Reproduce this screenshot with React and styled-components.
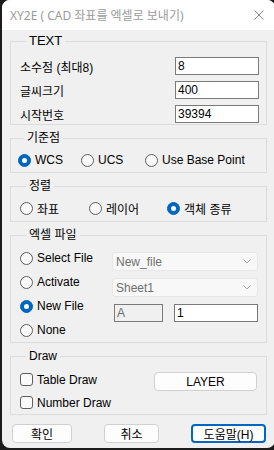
import React from "react";
import styled, { createGlobalStyle } from "styled-components";

const GlobalStyle = createGlobalStyle`
  html, body {
    margin: 0;
    padding: 0;
    background: #1c1c1c;
  }
  body {
    font-family: "Liberation Sans", "Noto Sans CJK KR", sans-serif;
    font-size: 12px;
    color: #000;
  }
`;

const Window = styled.div`
  width: 273px;
  height: 448px;
  margin-left: 2px;
  border-radius: 8px;
  overflow: hidden;
  background: #f0f0f0;
  display: flex;
  flex-direction: column;
`;

const TitleBar = styled.div`
  height: 30px;
  flex-shrink: 0;
  background: #ffffff;
  display: flex;
  align-items: center;
  justify-content: space-between;
  padding: 0 11px 0 8px;
`;

const Title = styled.span`
  font-family: "Noto Sans", "Noto Sans CJK KR", sans-serif;
  font-size: 12px;
  color: #9b9b9b;
`;

const Body = styled.div`
  display: flex;
  flex-direction: column;
  gap: 6px;
  padding: 4px 8px 0;
`;

const Group = styled.fieldset`
  margin: 0;
  min-width: 0;
  border: 1px solid #dcdcdc;
  padding: ${(p) => p.$pad || "7px 9px 4px"};
`;

const Legend = styled.legend`
  margin-left: 6px;
  padding: 0 3px;
  font-size: ${(p) => (p.$big ? "13px" : "12px")};
  line-height: 14px;
`;

const FieldGrid = styled.div`
  display: grid;
  grid-template-columns: 1fr 84px;
  grid-auto-rows: 18px;
  row-gap: 6px;
  align-items: center;
`;

const TextBox = styled.div`
  box-sizing: border-box;
  width: ${(p) => p.$w || "84px"};
  height: 18px;
  border: 1px solid #7a7a7a;
  background: ${(p) => (p.$disabled ? "#f0f0f0" : "#ffffff")};
  color: ${(p) => (p.$disabled ? "#6d6d6d" : "#000")};
  padding: 0 2px;
  line-height: 16px;
  margin-left: ${(p) => p.$ml || "0"};
`;

const RadioRow = styled.div`
  display: flex;
  align-items: center;
  height: 16px;
  padding-left: ${(p) => p.$pl || "0"};
`;

const Option = styled.div`
  display: flex;
  align-items: center;
  gap: 4px;
  width: ${(p) => p.$w || "auto"};
  height: ${(p) => p.$h || "auto"};
  white-space: nowrap;
`;

const RadioDot = styled.span`
  box-sizing: border-box;
  width: 13px;
  height: 13px;
  flex-shrink: 0;
  border-radius: 50%;
  border: 1px solid ${(p) => (p.$on ? "#0067c0" : "#5f5f5f")};
  background: ${(p) => (p.$on ? "#0067c0" : "#f9f9f9")};
  display: flex;
  align-items: center;
  justify-content: center;
  &::after {
    content: "";
    display: ${(p) => (p.$on ? "block" : "none")};
    width: 5px;
    height: 5px;
    border-radius: 50%;
    background: #ffffff;
  }
`;

const CheckBox = styled.span`
  box-sizing: border-box;
  width: 13px;
  height: 13px;
  flex-shrink: 0;
  border-radius: 3px;
  border: 1px solid #5f5f5f;
  background: #f9f9f9;
`;

const Split = styled.div`
  display: flex;
  justify-content: space-between;
`;

const Column = styled.div`
  display: flex;
  flex-direction: column;
  gap: ${(p) => p.$gap || "0"};
  padding-top: ${(p) => p.$pt || "0"};
`;

const Combo = styled.div`
  box-sizing: border-box;
  width: 146px;
  height: 19px;
  border: 1px solid #e6e6e6;
  border-radius: 3px;
  background: #f8f8f8;
  color: #707070;
  display: flex;
  align-items: center;
  justify-content: space-between;
  padding: 0 6px 0 3px;
`;

const InlineRow = styled.div`
  display: flex;
  align-items: center;
  gap: 11px;
`;

const Button = styled.div`
  box-sizing: border-box;
  width: ${(p) => p.$w};
  height: 19px;
  border-radius: 4px;
  background: #fdfdfd;
  border: ${(p) => (p.$primary ? "2px solid #0067c0" : "1px solid #d0d0d0")};
  display: flex;
  align-items: center;
  justify-content: center;
  font-size: 12px;
`;

const ButtonRow = styled.div`
  display: flex;
  justify-content: space-between;
  margin-top: 3px;
  padding: 0 1px 0 2px;
`;

const Chevron = () => (
  <svg width="8" height="5" viewBox="0 0 8 5">
    <path d="M0.5 0.5 L4 4 L7.5 0.5" fill="none" stroke="#a8a8a8" strokeWidth="1" />
  </svg>
);

const CloseIcon = () => (
  <svg width="10" height="10" viewBox="0 0 10 10">
    <path d="M0.5 0.5 L9.5 9.5 M9.5 0.5 L0.5 9.5" stroke="#8a8a8a" strokeWidth="1" />
  </svg>
);

const Radio = ({ on, label, w, h }) => (
  <Option $w={w} $h={h}>
    <RadioDot $on={on} />
    <span>{label}</span>
  </Option>
);

const Check = ({ label, h }) => (
  <Option $h={h}>
    <CheckBox />
    <span>{label}</span>
  </Option>
);

const App = () => {
  return (
    <>
      <GlobalStyle />
      <Window>
        <TitleBar>
          <Title>XY2E ( CAD 좌표를 엑셀로 보내기)</Title>
          <CloseIcon />
        </TitleBar>
        <Body>
          <Group $pad="9px 7px 1px 9px">
            <Legend $big>TEXT</Legend>
            <FieldGrid>
              <span>소수점 (최대8)</span>
              <TextBox>8</TextBox>
              <span>글씨크기</span>
              <TextBox>400</TextBox>
              <span>시작번호</span>
              <TextBox>39394</TextBox>
            </FieldGrid>
          </Group>

          <Group $pad="7px 9px 4px 7px">
            <Legend>기준점</Legend>
            <RadioRow>
              <Radio on label="WCS" w="63px" />
              <Radio label="UCS" w="64px" />
              <Radio label="Use Base Point" />
            </RadioRow>
          </Group>

          <Group $pad="7px 9px 5px 9px">
            <Legend>정렬</Legend>
            <RadioRow>
              <Radio label="좌표" w="69px" />
              <Radio label="레이어" w="78px" />
              <Radio on label="객체 종류" />
            </RadioRow>
          </Group>

          <Group $pad="4px 8px 0 9px">
            <Legend>엑셀 파일</Legend>
            <Split>
              <Column>
                <Radio label="Select File" h="24px" />
                <Radio label="Activate" h="24px" />
                <Radio on label="New File" h="24px" />
                <Radio label="None" h="24px" />
              </Column>
              <Column $pt="6px" $gap="7px">
                <Combo>
                  <span>New_file</span>
                  <Chevron />
                </Combo>
                <Combo>
                  <span>Sheet1</span>
                  <Chevron />
                </Combo>
                <InlineRow>
                  <TextBox $disabled $w="49px" $ml="2px">A</TextBox>
                  <TextBox>1</TextBox>
                </InlineRow>
              </Column>
            </Split>
          </Group>

          <Group $pad="5px 9px 0 9px">
            <Legend>Draw</Legend>
            <Split>
              <Column>
                <Check label="Table Draw" h="23px" />
                <Check label="Number Draw" h="23px" />
              </Column>
              <Column $pt="4px">
                <Button $w="103px">LAYER</Button>
              </Column>
            </Split>
          </Group>

          <ButtonRow>
            <Button $w="60px">확인</Button>
            <Button $w="55px">취소</Button>
            <Button $w="75px" $primary>
              도움말(H)
            </Button>
          </ButtonRow>
        </Body>
      </Window>
    </>
  );
};

export default App;
